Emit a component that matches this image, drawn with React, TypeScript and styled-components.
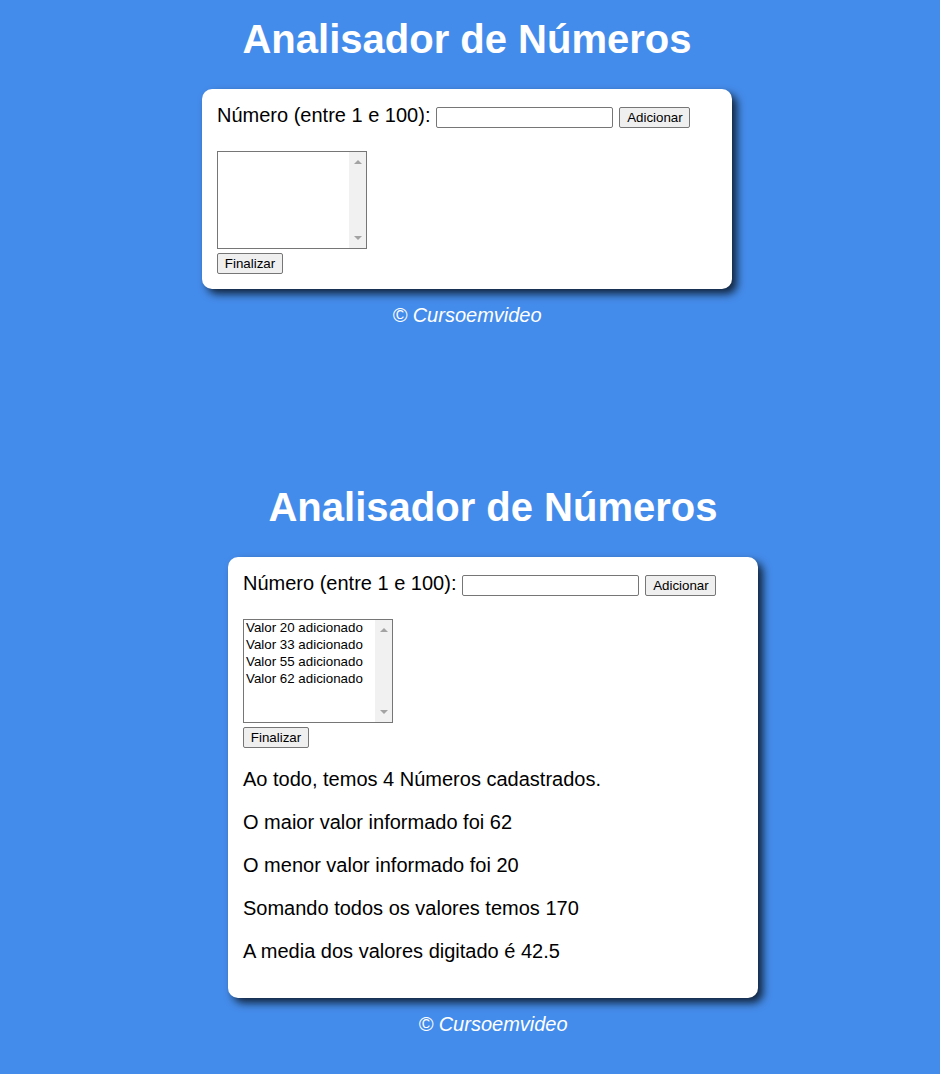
import React from "react";
import styled, { createGlobalStyle } from "styled-components";

const Global = createGlobalStyle`
  html, body {
    margin: 0;
    padding: 0;
    background: #448ceb;
  }
  body {
    font-family: "Liberation Sans", Arial, sans-serif;
  }
`;

const Page = styled.main`
  display: flex;
  flex-direction: column;
  gap: 141px;
  min-height: 1074px;
  background: #448ceb;
`;

const Screen = styled.section<{ $left: number; $right: number }>`
  display: flex;
  flex-direction: column;
  align-items: center;
  padding-left: ${(p) => p.$left}px;
  padding-right: ${(p) => p.$right}px;
`;

const Title = styled.h1`
  margin: 16px 0 27px;
  font-size: 40px;
  line-height: 46px;
  font-weight: bold;
  color: #ffffff;
  text-align: center;
`;

const Card = styled.div`
  box-sizing: border-box;
  width: 530px;
  padding: 15px;
  background: #ffffff;
  border-radius: 10px;
  box-shadow: 5px 5px 8px rgba(0, 0, 0, 0.75);
  display: flex;
  flex-direction: column;
  align-items: flex-start;
  color: #000;
`;

const InputRow = styled.div`
  display: flex;
  align-items: baseline;
  font-size: 20px;
  line-height: 23px;
  height: 24px;
`;

const Label = styled.span`
  margin-right: 6px;
`;

const TextInput = styled.input`
  box-sizing: border-box;
  width: 177px;
  height: 21px;
  border: 1px solid #767676;
  border-radius: 2px;
  padding: 1px 2px;
  font: 13.33px "Liberation Sans", Arial, sans-serif;
  background: #fff;
  margin: 0 6px 0 0;
  outline: none;
`;

const Button = styled.button<{ $w: number }>`
  box-sizing: border-box;
  width: ${(p) => p.$w}px;
  height: 21px;
  padding: 1px 0;
  margin: 0;
  border: 1px solid #767676;
  border-radius: 2px;
  background: #efefef;
  color: #000;
  font: 13.33px "Liberation Sans", Arial, sans-serif;
  line-height: 17px;
  text-align: center;
`;

const ListBox = styled.div<{ $h: number }>`
  box-sizing: border-box;
  display: flex;
  width: 150px;
  height: ${(p) => p.$h}px;
  margin-top: 23px;
  border: 1px solid #767676;
  background: #fff;
`;

const Options = styled.div`
  flex: 1;
  display: flex;
  flex-direction: column;
  font: 13.33px "Liberation Sans", Arial, sans-serif;
  color: #000;
`;

const Option = styled.div`
  height: 17px;
  line-height: 15px;
  padding-left: 2px;
  white-space: nowrap;
`;

const ScrollTrack = styled.div`
  width: 17px;
  background: #f1f1f1;
  display: flex;
  flex-direction: column;
  justify-content: space-between;
  align-items: center;
  padding: 8px 0;
  box-sizing: border-box;
`;

const Arrow = styled.div<{ $down?: boolean }>`
  width: 0;
  height: 0;
  border-left: 4px solid transparent;
  border-right: 4px solid transparent;
  ${(p) =>
    p.$down
      ? "border-top: 4px solid #a3a3a3;"
      : "border-bottom: 4px solid #a3a3a3;"}
`;

const FinishRow = styled.div`
  margin-top: 4px;
  display: flex;
`;

const Results = styled.div`
  align-self: stretch;
  font-size: 20px;
  line-height: 23px;

  p {
    margin: 20px 0;
  }
`;

const Footer = styled.footer`
  margin-top: 15px;
  font-size: 20px;
  line-height: 23px;
  font-style: italic;
  color: #ffffff;
  text-align: center;
`;

function Analyzer({
  left,
  right,
  listHeight,
  values,
  showResults,
}: {
  left: number;
  right: number;
  listHeight: number;
  values: number[];
  showResults: boolean;
}) {
  const total = values.reduce((a, b) => a + b, 0);
  const max = values.length ? Math.max(...values) : 0;
  const min = values.length ? Math.min(...values) : 0;
  return (
    <Screen $left={left} $right={right}>
      <Title>Analisador de Números</Title>
      <Card>
        <InputRow>
          <Label>Número (entre 1 e 100):</Label>
          <TextInput type="text" />
          <Button $w={71}>Adicionar</Button>
        </InputRow>
        <ListBox $h={listHeight}>
          <Options>
            {values.map((v) => (
              <Option key={v}>Valor {v} adicionado</Option>
            ))}
          </Options>
          <ScrollTrack>
            <Arrow />
            <Arrow $down />
          </ScrollTrack>
        </ListBox>
        <FinishRow>
          <Button $w={66}>Finalizar</Button>
        </FinishRow>
        {showResults && (
          <Results>
            <p>Ao todo, temos {values.length} Números cadastrados.</p>
            <p>O maior valor informado foi {max}</p>
            <p>O menor valor informado foi {min}</p>
            <p>Somando todos os valores temos {total}</p>
            <p>A media dos valores digitado é {total / values.length}</p>
          </Results>
        )}
      </Card>
      <Footer>© Cursoemvideo</Footer>
    </Screen>
  );
}

export default function App() {
  return (
    <>
      <Global />
      <Page>
        <Analyzer left={0} right={6} listHeight={98} values={[]} showResults={false} />
        <Analyzer
          left={46}
          right={0}
          listHeight={104}
          values={[20, 33, 55, 62]}
          showResults={true}
        />
      </Page>
    </>
  );
}
